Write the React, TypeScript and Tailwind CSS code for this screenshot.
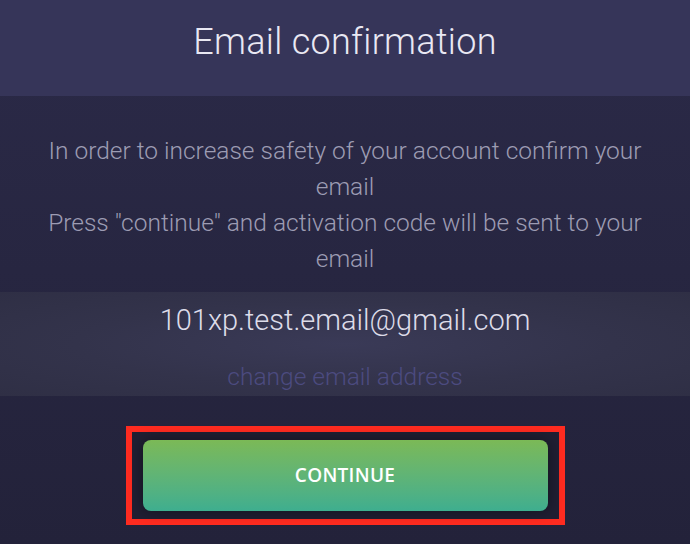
export default function App() {
  return (
    <div
      className="w-[690px] h-[544px] overflow-hidden flex flex-col bg-gradient-to-b from-[#2b2a48] to-[#23223a]"
      style={{ fontFamily: "Roboto, 'Open Sans', sans-serif" }}
    >
      <header className="h-[96px] shrink-0 bg-[#363559] flex items-center justify-center pb-[12px]">
        <h1 className="text-[36px] font-light text-[#e9e8f3] tracking-[0.3px]">
          Email confirmation
        </h1>
      </header>

      <section className="pt-[37px] pb-[15px] text-center text-[24.5px] leading-[36px] font-light text-[#9d9cb3]">
        <p className="whitespace-nowrap">
          In order to increase safety of your account confirm your
          <br />
          email
        </p>
        <p className="whitespace-nowrap">
          Press "continue" and activation code will be sent to your
          <br />
          email
        </p>
      </section>

      <section className="h-[104px] shrink-0 flex flex-col items-center bg-[radial-gradient(ellipse_at_center,#3a3a57_0%,#33334b_55%,#2f2f45_100%)]">
        <div className="mt-[10px] text-[29px] leading-[36px] font-light text-[#dddce9]">
          101xp.test.email@gmail.com
        </div>
        <a className="mt-[24px] text-[24.5px] leading-[30px] font-light text-[#4c4b80] cursor-pointer">
          change email address
        </a>
      </section>

      <div className="flex justify-center pt-[30px]">
        <div className="border-[6px] border-[#fe2b20] px-[11px] py-[8px] bg-[#201f33]">
          <button
            className="w-[405px] h-[71px] rounded-[8px] bg-gradient-to-b from-[#7bb956] to-[#3eae8f] text-white text-[19px] font-semibold tracking-[0.3px] shadow-[0_0_14px_rgba(0,0,0,0.4)]"
            style={{ fontFamily: "'Open Sans', sans-serif" }}
          >
            CONTINUE
          </button>
        </div>
      </div>
    </div>
  );
}
